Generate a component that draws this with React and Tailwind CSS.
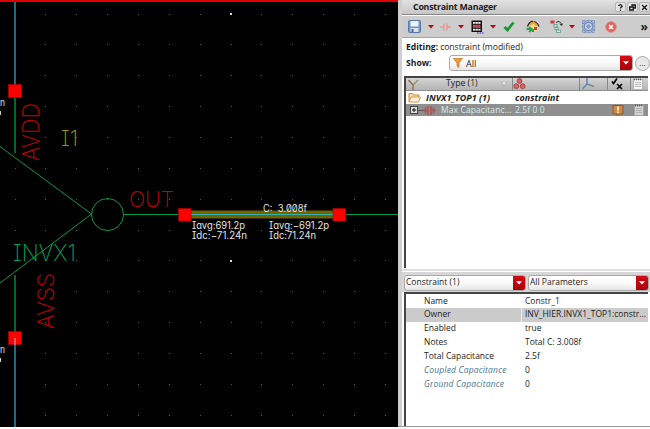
import React from "react";

const STEP = 30.85;
const dots = [];
for (let r = 0; r < 14; r++) {
  for (let c = 0; c < 13; c++) {
    if (c === 0 && (r < 5 || r > 8)) continue;
    dots.push([Math.round(14.6 + c * STEP), Math.round(13.6 + r * STEP)]);
  }
}

function Label({ x, y, w, size, color, turn, weight = 200, children }) {
  return (
    <text
      x={x}
      y={y}
      fill={color}
      className="[font-feature-settings:'cv08','zero','cv11']"
      fontFamily="Inter, sans-serif"
      fontWeight={weight}
      fontSize={size}
      textLength={w}
      lengthAdjust="spacingAndGlyphs"
      transform={turn ? `rotate(-90 ${x} ${y})` : undefined}
    >
      {children}
    </text>
  );
}

function Schematic() {
  const note = { size: 10, color: "#e4e4e4", weight: 400 };
  return (
    <svg width="398" height="427" viewBox="0 0 398 427" className="block shrink-0 bg-black">
      {dots.map(([x, y]) => (
        <rect key={`${x}-${y}`} x={x} y={y} width="1" height="1" fill="#5c5c5c" />
      ))}
      <rect x="230" y="13" width="2" height="2" fill="#ddd" />
      <rect x="230" y="260" width="2" height="2" fill="#ddd" />
      <rect width="398" height="2" fill="#e00000" />
      <rect x="14" y="2" width="2" height="86" fill="#1b6a88" />
      <rect x="14" y="92" width="2" height="61" fill="#00682f" />
      <rect x="14" y="275" width="2" height="62" fill="#00682f" />
      <g stroke="#009a50" strokeWidth="1" fill="none">
        <path d="M0 146.500L91.500 214L0 283" />
        <circle cx="107.500" cy="214.500" r="16" />
        <path d="M123.500 214.500H180M343 214.500H398" />
      </g>
      <rect x="189" y="210" width="146" height="9" fill="#383000" />
      <rect x="189" y="211" width="146" height="7" fill="#6e6500" />
      <rect x="189" y="214" width="146" height="1" fill="#35b0b0" />
      <g fill="#ff0000" stroke="#b00000" strokeWidth="0.6">
        <rect x="8.500" y="84.500" width="13" height="13" />
        <rect x="8.500" y="331.500" width="13" height="13" />
        <rect x="178.500" y="208.500" width="12.500" height="12.500" />
        <rect x="333" y="208.500" width="12.500" height="12.500" />
      </g>
      <rect x="14" y="338" width="2" height="7" fill="#d06070" />
      <rect x="14" y="345" width="2" height="82" fill="#1b6a88" />
      <Label x={39} y={161} w={58} size={23} color="#cc0000" turn>AVDD</Label>
      <Label x={54} y={329} w={56} size={23} color="#cc0000" turn>AVSS</Label>
      <Label x={129} y={207} w={45} size={22} color="#cc0000">OUT</Label>
      <Label x={13} y={261} w={63} size={23} color="#00a05a">INVX1</Label>
      <Label x={61} y={146} w={17} size={22} color="#a09a00">I1</Label>
      <Label x={263} y={212} w={44} {...note}>C:&#160; 3.008f</Label>
      <Label x={192} y={229} w={53} {...note}>Iavg:691.2p</Label>
      <Label x={192} y={239} w={55} {...note}>Idc:−71.24n</Label>
      <Label x={269} y={229} w={60} {...note}>Iavg:−691.2p</Label>
      <Label x={269} y={239} w={47} {...note}>Idc:71.24n</Label>
      <Label x={0} y={106} w={5} {...note}>n</Label>
      <Label x={0} y={353} w={5} {...note}>n</Label>
      <rect x="0" y="111" width="1" height="4" fill="#ccc" />
      <rect x="0" y="358" width="1" height="4" fill="#ccc" />
    </svg>
  );
}

function Down() {
  return (
    <svg width="6" height="4" viewBox="0 0 6 4" className="shrink-0"><path d="M0 0H6L3 3.600Z" fill="#c8000c" /></svg>
  );
}

function Save() {
  return (
    <svg width="13" height="13" viewBox="0 0 13 13" className="shrink-0">
      <rect x="0.500" y="0.500" width="12" height="12" rx="1.300" fill="#7596c8" stroke="#5a77a9" />
      <rect x="2.500" y="1" width="8" height="5.500" fill="#edf3fb" />
      <rect x="2.500" y="8" width="8" height="4" fill="#dde0df" />
      <rect x="3.500" y="9" width="2" height="3" fill="#47659b" />
    </svg>
  );
}
function CapIcon() {
  return (
    <svg width="11" height="10" viewBox="0 0 11 10" className="shrink-0" fill="none" stroke="#e09893" strokeWidth="1.300">
      <path d="M0 5H4M7 5H11M4 1.500V8.500M7 1.500V8.500" />
    </svg>
  );
}
function TableIcon() {
  return (
    <svg width="13" height="14" viewBox="0 0 13 14" className="shrink-0">
      <rect x="0.500" y="0.500" width="10.500" height="11.500" fill="#111" />
      <rect x="2" y="2" width="7.500" height="1.800" fill="#f4f4f4" />
      <rect x="2" y="8.800" width="7.500" height="1.800" fill="#f4f4f4" />
      <rect x="2" y="4.700" width="7.500" height="3.200" fill="#e0506a" />
      <path d="M4.300 1V12M7.200 1V12" stroke="#111" strokeWidth="0.500" />
      <path d="M6 13H13" stroke="#6950c0" strokeWidth="1.300" strokeDasharray="1.500 1" />
    </svg>
  );
}
function Check() {
  return (
    <svg width="12" height="11" viewBox="0 0 12 11" className="shrink-0"><path d="M1.500 6L4.500 9L10.500 1.500" fill="none" stroke="#129c2c" strokeWidth="2.800" /></svg>
  );
}
function HomeIcon() {
  return (
    <svg width="14" height="13" viewBox="0 0 14 13" className="shrink-0">
      <path d="M3 6V11H12V6L7.500 2Z" fill="#f2d890" />
      <path d="M1.500 6.500C3 2.500 5.500 1 7.500 1.500C10.500 2 12 4 13 6.500" fill="none" stroke="#201a10" strokeWidth="1.200" />
      <path d="M4 5L7.500 2.200L11 5.500" fill="none" stroke="#efa128" strokeWidth="2" />
      <path d="M0.500 9H5M3 7L6 9.500L3 12M7 9V12" fill="none" stroke="#24a648" strokeWidth="2" />
      <rect x="8" y="7" width="3" height="3" fill="#ce4034" />
    </svg>
  );
}
function FlowIcon() {
  return (
    <svg width="13" height="13" viewBox="0 0 13 13" className="shrink-0">
      <rect x="0.500" y="0.500" width="4" height="3" fill="#d63d45" />
      <path d="M6 2.500C9 0.500 11 2 11.500 5M9.800 4L11.600 5.500L12.700 3.500" fill="none" stroke="#333" strokeWidth="1" />
      <g fill="#cfe6de" stroke="#5d9b8b" strokeWidth="0.800">
        <rect x="4" y="4.500" width="3" height="2.500" /><rect x="5" y="7.500" width="3" height="2.300" /><rect x="6.500" y="10" width="4" height="2.400" />
      </g>
    </svg>
  );
}
function FrameIcon() {
  return (
    <svg width="13" height="13" viewBox="0 0 13 13" className="shrink-0">
      <rect x="0.500" y="0.500" width="12" height="12" fill="#a9bbd1" stroke="#7f96ba" strokeDasharray="3 1" />
      <circle cx="6.500" cy="6.500" r="4.200" fill="#c4d0df" stroke="#6f8dba" strokeWidth="1.300" />
      <path d="M6.500 4L9 6.500L6.500 9L4 6.500Z" fill="#8099bc" />
      <path d="M1 4L4 1M9 1L12 4M1 9L4 12M9 12L12 9" stroke="#7890b6" />
    </svg>
  );
}
function StopIcon() {
  return (
    <svg width="12" height="12" viewBox="0 0 12 12" className="shrink-0">
      <circle cx="6" cy="6" r="5.400" fill="#e4605e" stroke="#d69b98" />
      <path d="M4 4L8 8M8 4L4 8" stroke="#fff" strokeWidth="1.700" />
    </svg>
  );
}
function Molecule() {
  return (
    <svg width="13" height="12" viewBox="0 0 13 12" className="shrink-0" fill="#d5696c" stroke="#a7383d" strokeWidth="0.900">
      <circle cx="6.500" cy="3" r="2.400" /><circle cx="3.300" cy="8.200" r="2.400" /><circle cx="9.700" cy="8.200" r="2.400" />
    </svg>
  );
}
function NoteIcon({ dim }) {
  return (
    <svg width="10" height="12" viewBox="0 0 10 12" className="shrink-0">
      <rect x="0.500" y="1.500" width="9" height="10" fill={dim ? "#d2d2d2" : "#f6f6f6"} stroke="#999" strokeWidth="0.600" />
      <path d="M1 1.500H9" stroke="#555" strokeDasharray="1 1" strokeWidth="1.500" />
      <path d="M2 4.500H8M2 6.500H8M2 8.500H8" stroke="#a2a2a2" strokeWidth="0.700" />
    </svg>
  );
}

function TitleButton({ children }) {
  return (
    <span className="flex h-[10px] w-[11px] items-center justify-center rounded-[2px] border border-[#b5b5b5] bg-[#e4e4e4]">
      <svg width="7" height="7" viewBox="0 0 7 7" className="shrink-0" fill="none" stroke="#111" strokeWidth="1.300">{children}</svg>
    </span>
  );
}

function Combo({ children, className }) {
  return (
    <div className={`flex overflow-hidden rounded-[3px] border border-[#aaa] bg-gradient-to-b from-white via-[#fafafa] to-[#e5e5e5] ${className}`}>
      <div className="flex min-w-0 flex-1 items-center">{children}</div>
      <div className="flex w-[12px] items-center justify-center bg-gradient-to-b from-[#d40d15] to-[#a90009]">
        <svg width="6" height="4" viewBox="0 0 6 4"><path d="M0 0.300H6L3 3.500Z" fill="#fff" /></svg>
      </div>
    </div>
  );
}

const rows = [
  ["Name", "Constr_1", ""],
  ["Owner", "INV_HIER.INVX1_TOP1:constr...", ""],
  ["Enabled", "true", ""],
  ["Notes", "Total C: 3.008f", ""],
  ["Total Capacitance", "2.5f", ""],
  ["Coupled Capacitance", "0", "italic text-[#47748e] tracking-[0.18px]"],
  ["Ground Capacitance", "0", "italic text-[#47748e] tracking-[0.18px]"],
];

function Manager() {
  return (
    <div className="flex min-w-0 flex-1 flex-col bg-white">
      <div className="flex h-[15px] shrink-0 items-center border-b border-[#858585] bg-gradient-to-b from-[#e2e2e2] to-[#c6c6c6] pl-[11px]">
        <span className="flex-1 text-[8.800px] font-bold leading-[12px] tracking-[-0.22px]">Constraint Manager</span>
        <div className="flex gap-px">
          <TitleButton><path d="M1.500 2C2 0.500 5.500 0.500 5 2.500C4.800 3.300 3.500 3.300 3.500 4.500M3.500 5.500V7" /></TitleButton>
          <TitleButton><path d="M3 2V1H6.300V4H5M0.700 3H4.300V6H0.700Z" /></TitleButton>
          <TitleButton><path d="M1 1L6 6M6 1L1 6" /></TitleButton>
        </div>
      </div>
      <div className="mt-px flex h-[22px] shrink-0 items-center border-b border-[#a5a5a5] bg-[#cdcdcd] pl-[6px] pr-[2px]">
        <Save />
        <div className="ml-[7px] flex"><Down /></div>
        <div className="ml-[6px] flex"><CapIcon /></div>
        <div className="ml-[7px] flex"><Down /></div>
        <div className="ml-[7px] flex"><TableIcon /></div>
        <div className="ml-[6px] flex"><Down /></div>
        <div className="ml-[7px] flex"><Check /></div>
        <div className="ml-[11px] flex"><HomeIcon /></div>
        <div className="ml-[10px] flex"><FlowIcon /></div>
        <div className="ml-[6px] flex"><Down /></div>
        <div className="ml-[7px] flex"><FrameIcon /></div>
        <div className="ml-[10px] flex"><StopIcon /></div>
        <span className="ml-auto text-[12px] font-bold leading-none">»</span>
      </div>
      <div className="flex h-[17px] shrink-0 items-center pl-[4px] pt-[2px] text-[8.600px]">
        <b className="mr-[2px]">Editing:</b><span className="tracking-[-0.05px]">constraint (modified)</span>
      </div>
      <div className="flex h-[16px] shrink-0 items-center pl-[4px]">
        <b className="w-[43px] pt-px text-[8.600px]">Show:</b>
        <Combo className="h-[16px] w-[184px]">
          <svg width="10" height="10" viewBox="0 0 10 10" className="ml-[3px]"><path d="M0.500 0.500H9.500L6 5V9.500L4 8V5Z" fill="#f09a38" stroke="#bc7426" strokeWidth="0.700" /></svg>
          <span className="ml-[3px] pt-px text-[9px]">All</span>
        </Combo>
        <div className="ml-[2px] flex h-[15px] w-[15px] shrink-0 items-center justify-center rounded-full border border-[#aaa] bg-[#e8e8e8] text-[8px] leading-none">...</div>
      </div>
      <div className="ml-[2px] mr-[2px] mt-[5px] flex h-[192px] shrink-0 flex-col border-l-2 border-t-2 border-[#444]">
        <div className="flex h-[13px] shrink-0 items-stretch border-b border-[#8f8f8f] bg-gradient-to-b from-[#d5d5d5] to-[#b4b4b4] text-[8.700px]">
          <div className="flex w-[107px] items-center border-r border-[#888] pl-[2px]">
            <svg width="11" height="11" viewBox="0 0 11 11" fill="none"><path d="M0.500 1L5 6V11" stroke="#8c5c42" strokeWidth="1.200" /><path d="M5 6L10 1" stroke="#789b55" strokeWidth="1.200" /></svg>
            <span className="ml-[27px]">Type (1)</span>
            <svg width="6" height="4" viewBox="0 0 6 4" className="ml-auto mr-[5px]"><path d="M0 0H6L3 3.500Z" fill="#eee" stroke="#888" strokeWidth="0.500" /></svg>
          </div>
          <div className="flex w-[67px] items-center border-r border-[#888]"><Molecule /></div>
          <div className="flex w-[28px] items-center border-r border-[#888] pl-[2px]">
            <svg width="12" height="12" viewBox="0 0 12 12" fill="none" stroke="#6689b4" strokeWidth="1.600"><path d="M5 0V6L0.500 11M5 6L12 8.500" /></svg>
          </div>
          <div className="flex w-[23px] items-center border-r border-[#888] pl-[3px]">
            <svg width="12" height="12" viewBox="0 0 12 12" fill="none" stroke="#050505" strokeWidth="1.700"><path d="M1 3.500L2.500 5.500L6 0.500M6 6L11 11M11 6L6 11" /></svg>
          </div>
          <div className="flex flex-1 items-center pl-[2px]"><NoteIcon /></div>
        </div>
        <div className="flex h-[13px] shrink-0 items-center whitespace-nowrap text-[8.900px] font-bold italic">
          <svg width="13" height="11" viewBox="0 0 13 11" className="ml-[2px] shrink-0"><path d="M1 9.500V1.500H4.500L5.500 3H11V5" fill="#f8dcae" stroke="#c28a3e" /><path d="M1 10L3 5H12.500L10.500 10Z" fill="#fff1d7" stroke="#db9a4d" /></svg>
          <span className="ml-[5px] w-[89px] tracking-[0.06px]">INVX1_TOP1 (1)</span>
          <span className="tracking-[0.1px]">constraint</span>
        </div>
        <div className="flex h-[12px] shrink-0 items-center whitespace-nowrap bg-[#8f8f8f] text-[8.500px] text-[#d4edef]">
          <svg width="8" height="8" viewBox="0 0 8 8" className="ml-[4px] shrink-0"><rect x="0.500" y="0.500" width="7" height="7" fill="#ddd" stroke="#444" /><path d="M2 4H6M4 2V6" stroke="#111" /></svg>
          <span className="h-px w-[5px] shrink-0 bg-[#555]" />
          <svg width="13" height="11" viewBox="0 0 13 11" className="shrink-0" fill="none" stroke="#a85458" strokeWidth="1.600"><path d="M0 5.500H5M8 5.500H13M5 1V10M8 1V10M2.500 2.500V8.500M10.500 2.500V8.500" /></svg>
          <span className="ml-[5px] w-[74px] shrink-0 tracking-[0.1px]">Max Capacitanc...</span>
          <span className="w-[97px] shrink-0 tracking-[0.1px]">2.5f 0 0</span>
          <svg width="12" height="11" viewBox="0 0 12 11" className="shrink-0"><path d="M1 0.500H11V9H7L5 10.500V9H1Z" fill="#d18a42" stroke="#925723" /><path d="M6 1.500V5.500M6 6.500V8" stroke="#fff" strokeWidth="1.600" /></svg>
          <div className="ml-[10px] flex"><NoteIcon dim /></div>
        </div>
      </div>
      <div className="mt-px h-[2px] shrink-0 bg-[#dedede]" />
      <div className="mt-px flex h-[20px] shrink-0 items-center gap-[2px] bg-[#d7d7d7] pl-[2px] pt-px text-[8.500px]">
        <Combo className="h-[16px] w-[122px]"><span className="pl-px">Constraint (1)</span></Combo>
        <Combo className="h-[16px] w-[121px]"><span className="pl-px">All Parameters</span></Combo>
      </div>
      <div className="ml-[2px] mr-[2px] flex flex-1 flex-col border-l-2 border-t-2 border-[#444] text-[8.500px]">
        {rows.map(([name, value, style], i) => (
          <div key={name} className={`flex h-[13.850px] shrink-0 items-center whitespace-nowrap ${i === 1 ? "bg-[#cbcbcb]" : ""}`}>
            <div className={`flex h-full w-[116px] items-center pl-[18px] ${i === 1 ? "border-r border-[#eee]" : ""} ${style}`}>{name}</div>
            <span className="pl-[3px]">{value}</span>
          </div>
        ))}
      </div>
    </div>
  );
}

export default function App() {
  return (
    <div className="flex h-[429px] w-[650px] flex-col overflow-hidden bg-white font-['Open_Sans',sans-serif] text-[#1c1c1c]">
      <div className="flex h-[427px] border-b border-[#999]">
        <Schematic />
        <div className="w-[4px] shrink-0 bg-[#cfcfcf]" />
        <Manager />
      </div>
    </div>
  );
}
